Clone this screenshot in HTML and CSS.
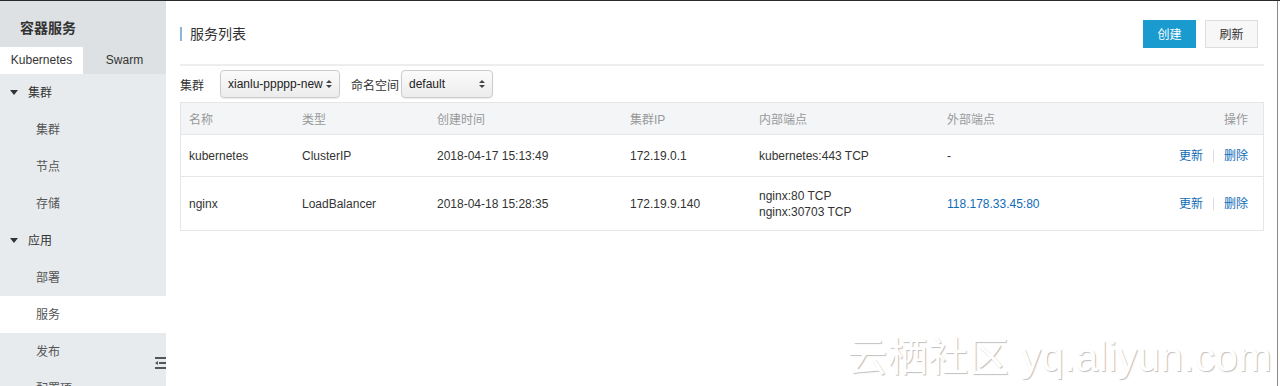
FILE: index.html
```html
<!DOCTYPE html>
<html lang="zh-cn">

<head>
    <meta charset="UTF-8">
    <title>容器服务 - 服务列表</title>
    <link rel="stylesheet" href="styles.css">
</head>

<body>
    <div class="page">
        <div class="sidebar">
            <div class="side-title">容器服务</div>
            <div class="tabs">
                <div class="tab active">Kubernetes</div>
                <div class="tab">Swarm</div>
            </div>
            <div class="menu">
                <div class="group"><span class="caret"></span>集群</div>
                <div class="item">集群</div>
                <div class="item">节点</div>
                <div class="item">存储</div>
                <div class="group"><span class="caret"></span>应用</div>
                <div class="item">部署</div>
                <div class="item current">服务</div>
                <div class="item">发布</div>
                <div class="item">配置项</div>
            </div>
            <div class="collapse">
                <svg width="11" height="14" viewBox="0 0 11 14">
                    <rect x="0" y="1" width="11" height="2" fill="#555"/>
                    <rect x="4" y="6" width="7" height="2" fill="#555"/>
                    <rect x="0" y="11" width="11" height="2" fill="#555"/>
                    <path d="M0 7 L3 5 L3 9 Z" fill="#555"/>
                </svg>
            </div>
        </div>

        <div class="main">
            <div class="head">
                <div class="title">服务列表</div>
                <div class="actions">
                    <button class="btn primary">创建</button>
                    <button class="btn">刷新</button>
                </div>
            </div>

            <div class="filters">
                <span class="label">集群</span>
                <div class="select wide">xianlu-ppppp-new<span class="arrows"></span></div>
                <span class="label ns">命名空间</span>
                <div class="select">default<span class="arrows"></span></div>
            </div>

            <table class="list">
                <tr>
                    <th class="c-name">名称</th>
                    <th class="c-type">类型</th>
                    <th class="c-time">创建时间</th>
                    <th class="c-ip">集群IP</th>
                    <th class="c-in">内部端点</th>
                    <th class="c-out">外部端点</th>
                    <th class="c-op">操作</th>
                </tr>
                <tr>
                    <td>kubernetes</td>
                    <td>ClusterIP</td>
                    <td>2018-04-17 15:13:49</td>
                    <td>172.19.0.1</td>
                    <td>kubernetes:443 TCP</td>
                    <td>-</td>
                    <td class="c-op"><a>更新</a><span class="sep"></span><a>删除</a></td>
                </tr>
                <tr class="tall">
                    <td>nginx</td>
                    <td>LoadBalancer</td>
                    <td>2018-04-18 15:28:35</td>
                    <td>172.19.9.140</td>
                    <td>nginx:80 TCP<br>nginx:30703 TCP</td>
                    <td><a>118.178.33.45:80</a></td>
                    <td class="c-op"><a>更新</a><span class="sep"></span><a>删除</a></td>
                </tr>
            </table>

            <div class="watermark">云栖社区 yq.aliyun.com</div>
        </div>
    </div>
</body>

</html>
```

FILE: styles.css
```css
html, body {
    margin: 0;
    height: 100%;
    overflow: hidden;
}

body {
    font-family: "Liberation Sans", "Noto Sans CJK SC", sans-serif;
    font-size: 12px;
    color: #333;
    background: #fff;
    border-top: 1px solid #2a2a2a;
    box-sizing: border-box;
}

.page {
    display: flex;
    height: 100%;
}

/* sidebar */
.sidebar {
    width: 166px;
    flex: none;
    background: #e8ebee;
    position: relative;
}

.side-title {
    height: 46px;
    line-height: 55px;
    padding-left: 20px;
    font-size: 14px;
    font-weight: bold;
    color: #333;
    background: #dde1e4;
}

.tabs {
    display: flex;
    height: 27px;
    background: #dde1e4;
}

.tab {
    flex: 1;
    text-align: center;
    line-height: 27px;
    color: #333;
}

.tab.active {
    background: #fff;
}

.group,
.item {
    height: 37px;
    line-height: 38px;
    color: #333;
}

.group {
    padding-left: 10px;
}

.item {
    padding-left: 36px;
    color: #555;
}

.item.current {
    background: #fff;
}

.caret {
    display: inline-block;
    width: 0;
    height: 0;
    border-left: 4px solid transparent;
    border-right: 4px solid transparent;
    border-top: 5px solid #333;
    margin-right: 10px;
    vertical-align: 2px;
}

.collapse {
    position: absolute;
    left: 155px;
    top: 355px;
    width: 11px;
    height: 16px;
}

/* main */
.main {
    flex: 1;
    position: relative;
    padding: 0 13px 0 14px;
    border-right: 1px solid #8a8a8a;
    margin-right: 2px;
}

.head {
    display: flex;
    align-items: center;
    justify-content: space-between;
    height: 63px;
    border-bottom: 2px solid #eceef0;
}

.title {
    font-size: 14px;
    padding-left: 8px;
    border-left: 2px solid #8eb4d8;
    line-height: 14px;
    margin-top: 2px;
    color: #333;
}

.actions {
    display: flex;
    gap: 9px;
    margin-right: 6px;
    margin-top: 2px;
}

.btn {
    width: 53px;
    height: 28px;
    font: inherit;
    color: #333;
    background: #f7f7f7;
    border: 1px solid #ddd;
    padding: 0;
}

.btn.primary {
    background: #1a9bd0;
    border-color: #1a9bd0;
    color: #fff;
}

.filters {
    display: flex;
    align-items: center;
    height: 36px;
}

.label {
    color: #333;
    width: 40px;
}

.label.ns {
    width: auto;
    margin: 0 2px 0 11px;
}

.select {
    position: relative;
    box-sizing: border-box;
    width: 92px;
    height: 28px;
    line-height: 26px;
    padding-left: 7px;
    border: 1px solid #ccc;
    border-radius: 4px;
    background: linear-gradient(#fbfbfb, #ececec);
    box-shadow: 0 1px 1px rgba(0, 0, 0, 0.08);
    color: #222;
}

.select.wide {
    width: 120px;
}

.arrows::before,
.arrows::after {
    content: "";
    position: absolute;
    right: 7px;
    border-left: 3px solid transparent;
    border-right: 3px solid transparent;
}

.arrows::before {
    top: 9px;
    border-bottom: 3px solid #444;
}

.arrows::after {
    top: 14px;
    border-top: 3px solid #444;
}

/* table */
.list {
    width: 100%;
    border-collapse: collapse;
    border: 1px solid #e4e6e8;
}

.list th {
    height: 31px;
    background: #f3f5f7;
    color: #999;
    font-weight: normal;
    text-align: left;
    padding: 0 8px;
}

.list td {
    height: 41px;
    padding: 0 8px;
    border-top: 1px solid #e4e6e8;
    line-height: 16px;
}

.list tr.tall td {
    height: 53px;
}

.list a {
    color: #0f6cb8;
}

.c-name { width: 97px; }
.c-type { width: 119px; }
.c-time { width: 177px; }
.c-ip { width: 113px; }
.c-in { width: 172px; }

.list .c-op {
    text-align: right;
    padding-right: 15px;
}

.sep {
    display: inline-block;
    width: 1px;
    height: 12px;
    background: #ddd;
    margin: 0 10px;
    vertical-align: -2px;
}

.watermark {
    position: absolute;
    right: 5px;
    bottom: 3px;
    font-size: 40px;
    color: #fff;
    text-shadow: 1px 1px 1px rgba(0, 0, 0, 0.25);
    white-space: nowrap;
    letter-spacing: 0.5px;
}
```
